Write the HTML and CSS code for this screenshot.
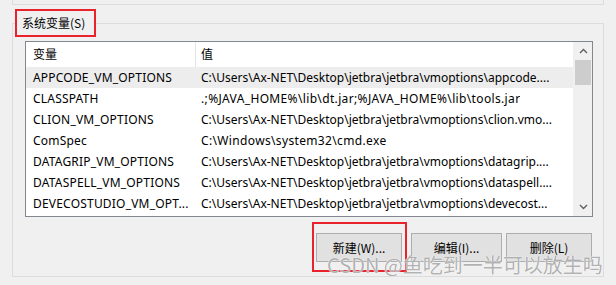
FILE: index.html
```html
<!DOCTYPE html>
<html lang="zh-CN">
<head>
    <meta charset="UTF-8">
    <title>系统变量</title>
    <link rel="stylesheet" href="styles.css">
</head>
<body>
    <div class="prev-group"></div>

    <fieldset class="group">
        <legend class="mark">系统变量(S)</legend>
        <div class="group-body">
            <div class="list">
                <div class="list-body">
                    <div class="row head"><span class="c1">变量</span><span class="c2">值</span></div>
                    <div class="row sel"><span class="c1">APPCODE_VM_OPTIONS</span><span class="c2">C:\Users\Ax-NET\Desktop\jetbra\jetbra\vmoptions\appcode....</span></div>
                    <div class="row"><span class="c1">CLASSPATH</span><span class="c2 loose">.;%JAVA_HOME%\lib\dt.jar;%JAVA_HOME%\lib\tools.jar</span></div>
                    <div class="row"><span class="c1">CLION_VM_OPTIONS</span><span class="c2">C:\Users\Ax-NET\Desktop\jetbra\jetbra\vmoptions\clion.vmo...</span></div>
                    <div class="row"><span class="c1">ComSpec</span><span class="c2 loose">C:\Windows\system32\cmd.exe</span></div>
                    <div class="row"><span class="c1">DATAGRIP_VM_OPTIONS</span><span class="c2">C:\Users\Ax-NET\Desktop\jetbra\jetbra\vmoptions\datagrip....</span></div>
                    <div class="row"><span class="c1">DATASPELL_VM_OPTIONS</span><span class="c2">C:\Users\Ax-NET\Desktop\jetbra\jetbra\vmoptions\dataspell....</span></div>
                    <div class="row"><span class="c1">DEVECOSTUDIO_VM_OPT...</span><span class="c2">C:\Users\Ax-NET\Desktop\jetbra\jetbra\vmoptions\devecost...</span></div>
                </div>
                <div class="scrollbar">
                    <div class="arrow">
                        <svg width="9" height="6" viewBox="0 0 9 6"><path d="M1 5 L4.5 1.5 L8 5" fill="none" stroke="#606060" stroke-width="1.4"/></svg>
                    </div>
                    <div class="thumb"></div>
                    <div class="track"></div>
                    <div class="arrow">
                        <svg width="9" height="6" viewBox="0 0 9 6"><path d="M1 1 L4.5 4.5 L8 1" fill="none" stroke="#606060" stroke-width="1.4"/></svg>
                    </div>
                </div>
            </div>

            <div class="buttons">
                <div class="btn-mark"><button class="btn">新建(W)...</button></div>
                <button class="btn wide">编辑(I)...</button>
                <button class="btn">删除(L)</button>
            </div>
        </div>
    </fieldset>

    <div class="watermark">CSDN @鱼吃到一半可以放生吗</div>
</body>
</html>
```

FILE: styles.css
```css
* {
    margin: 0;
    padding: 0;
    box-sizing: border-box;
}
body {
    font-family: 'Noto Sans', 'Noto Sans CJK SC', sans-serif;
    font-size: 12px;
    color: #000;
    background: #f0f0f0;
    width: 616px;
    height: 285px;
    overflow: hidden;
    position: relative;
}
.prev-group {
    margin: 0 12px;
    height: 5px;
    border: 1px solid #dcdcdc;
    border-top: none;
}
.group {
    margin: 4px 12px 0;
    border: 1px solid #dcdcdc;
    padding: 0;
}
.mark {
    margin-left: 2px;
    border: 2px solid #e8232b;
    padding: 4px 9px 4px 5px;
    line-height: 16px;
    font-family: 'Noto Sans CJK SC', sans-serif;
}
.group-body {
    padding: 4px 10px 4px 12px;
}
.list {
    display: flex;
    height: 176px;
    border: 1px solid #828790;
    background: #fff;
}
.list-body {
    width: 547px;
    overflow: hidden;
}
.row {
    display: flex;
    height: 21px;
    line-height: 21px;
    white-space: nowrap;
}
.row.head {
    height: 25px;
    line-height: 23px;
}
.row.sel {
    background: #ededed;
}
.c1 {
    width: 170px;
    flex-shrink: 0;
    padding-left: 7px;
    letter-spacing: 0.2px;
    overflow: hidden;
}
.head .c1 {
    border-right: 1px solid #e5e5e5;
    letter-spacing: 0;
    font-family: 'Noto Sans CJK SC', sans-serif;
}
.c2 {
    padding-left: 5px;
    overflow: hidden;
}
.c2.loose {
    letter-spacing: 0.35px;
}
.head .c2 {
    font-family: 'Noto Sans CJK SC', sans-serif;
}
.scrollbar {
    width: 19px;
    background: #f0f0f0;
    display: flex;
    flex-direction: column;
    padding-left: 1px;
}
.arrow {
    height: 18px;
    display: flex;
    align-items: center;
    justify-content: center;
    padding-left: 1px;
}
.thumb {
    height: 25px;
    margin: 0 1px;
    background: #cdcdcd;
}
.track {
    flex: 1;
}
.buttons {
    display: flex;
    justify-content: flex-end;
    align-items: flex-start;
    margin-top: 5px;
    padding-right: 1px;
}
.btn-mark {
    border: 2px solid #e8232b;
    padding: 9px 3px 8px 2px;
    margin-right: 4px;
}
.btn {
    display: block;
    width: 86px;
    height: 29px;
    background: #e1e1e1;
    border: 1px solid #adadad;
    font-family: 'Noto Sans CJK SC', sans-serif;
    font-size: 12px;
    color: #000;
}
.buttons > .btn {
    margin-top: 11px;
}
.buttons > .wide {
    width: 91px;
    margin-right: 4px;
}
.watermark {
    position: absolute;
    left: 327px;
    top: 250px;
    font-family: 'Noto Sans CJK SC', sans-serif;
    font-size: 20px;
    color: rgba(110, 110, 110, 0.55);
    text-shadow: 0 0 1px #fff, 0 0 1px #fff;
    white-space: nowrap;
}
```
